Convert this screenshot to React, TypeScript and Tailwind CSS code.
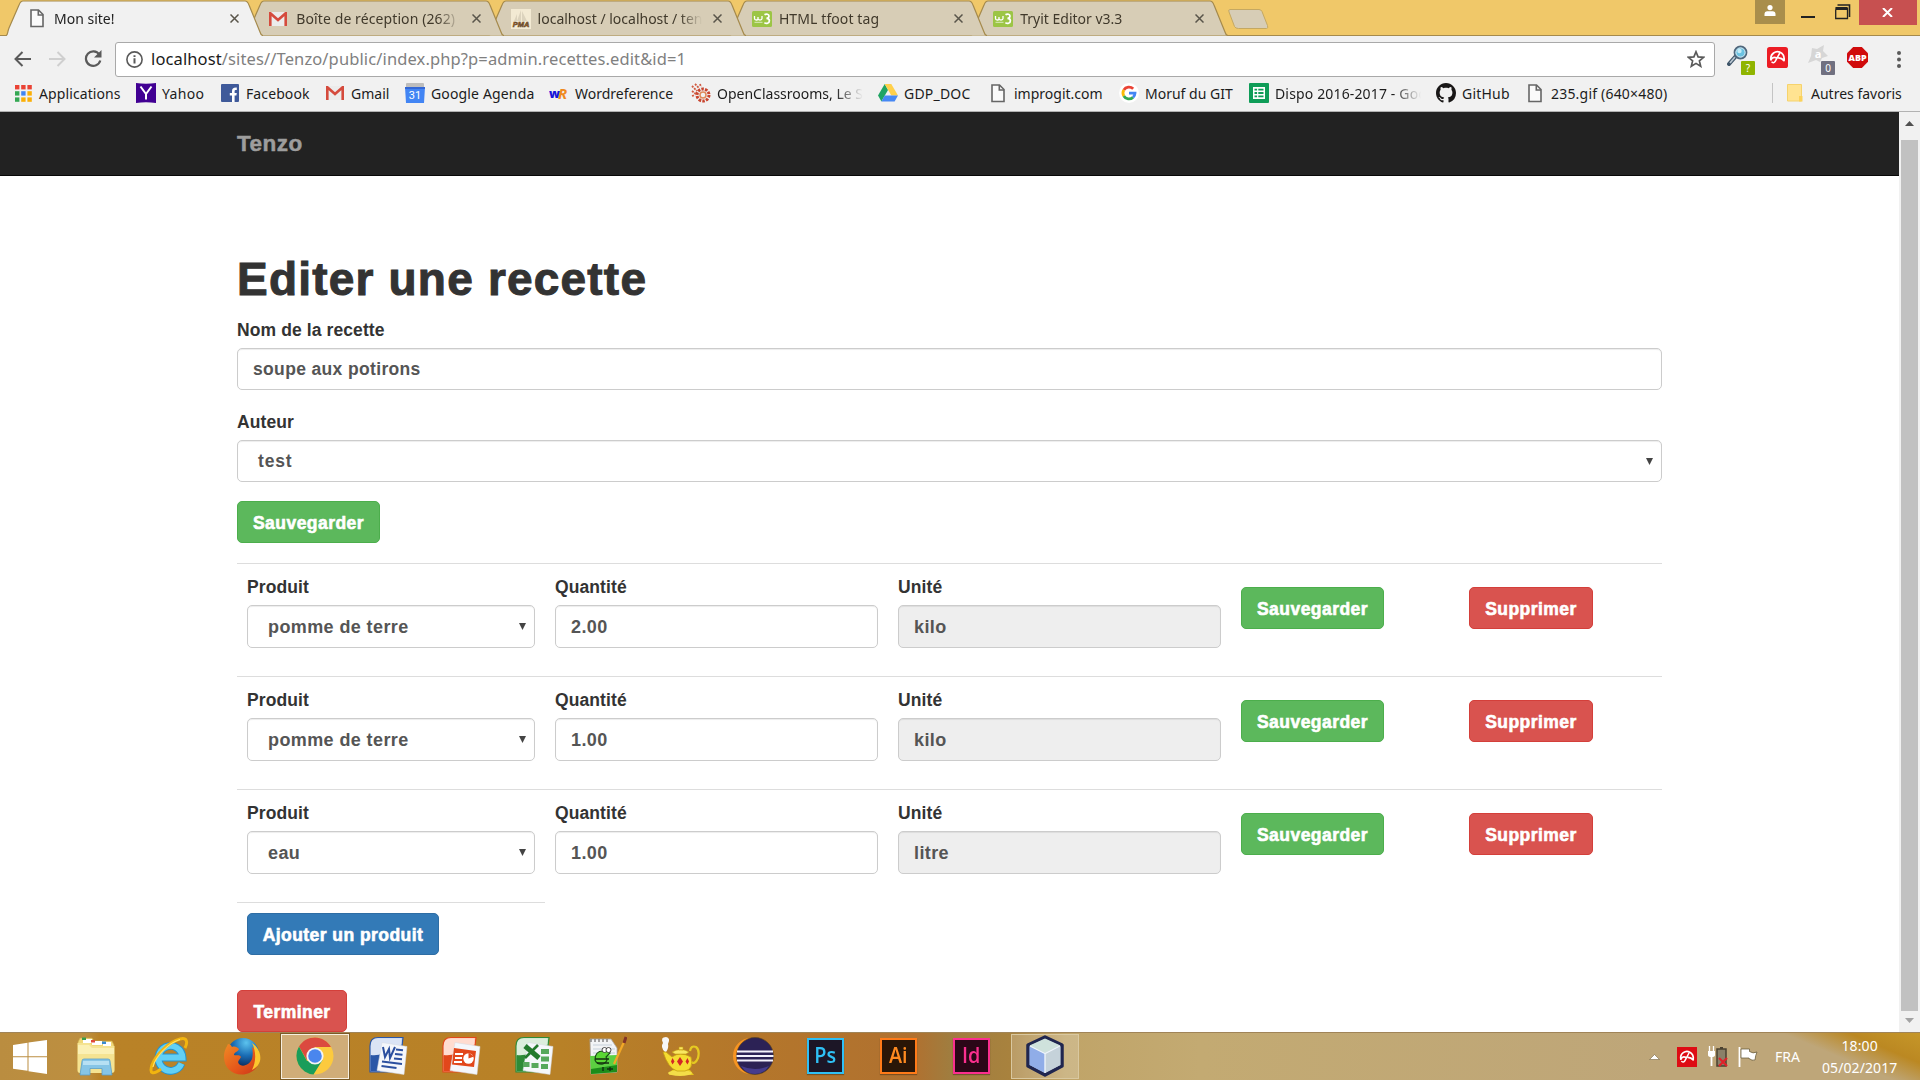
import React from "react";

type Kids = { children?: React.ReactNode };

const ui = "font-['Noto_Sans','Open_Sans',sans-serif]";

function FileIcon() {
  return (
    <svg width="14" height="19" viewBox="0 0 14 19" fill="#fafafa" stroke="#666" strokeWidth="1.6" className="shrink-0">
      <path d="M1 1h7.5L13 5.5V17.5H1z" />
      <path d="M8.3 1v5H13" fill="none" />
    </svg>
  );
}

function GmailIcon() {
  return (
    <svg width="18" height="14" viewBox="0 0 18 14" className="shrink-0">
      <rect x="1" width="16" height="14" rx="1" fill="#ececec" />
      <path d="M1.3 14V1.2L9 8l7.7-6.8V14" fill="none" stroke="#d54b3d" strokeWidth="2.6" />
    </svg>
  );
}

function W3Icon() {
  return (
    <svg width="20" height="16" viewBox="0 0 20 16" className="shrink-0">
      <rect width="20" height="16" rx="1.5" fill="#9cc545" />
      <path d="M2.500 5v2.500c0 2 3.500 2 3.500 0V6v1.500c0 2 4 2 4 0V5" fill="none" stroke="#fff" strokeWidth="1.300" />
      <path d="M12.500 3.800c2-1.500 4.500-.5 4.500 1.300 0 1.600-1.400 2.200-2.600 2.200 1.400 0 3 .6 3 2.500 0 2.700-3.200 3.300-5 1.900" fill="none" stroke="#fff" strokeWidth="1.700" />
      <path d="M2.500 11.300h8" stroke="#dcebbd" strokeWidth="1" />
    </svg>
  );
}

function PmaIcon() {
  return (
    <svg width="20" height="20" viewBox="0 0 20 20" className="shrink-0">
      <rect width="20" height="20" fill="#f3ead3" />
      <path d="M6 12L10 1v11zM11 12V2l5 10zM3 12l3-7v7z" fill="#dcd3bd" />
      <text x="10" y="18" textAnchor="middle" fontSize="7.500" fontWeight="900" fontStyle="italic" fill="#c2711d" stroke="#52402c" strokeWidth=".5" fontFamily="Liberation Sans">PMA</text>
    </svg>
  );
}

const tabs = [
  { title: "Mon site!", icon: <FileIcon />, z: "z-50", track: "" },
  { title: "Boîte de réception (262) -", icon: <GmailIcon />, z: "z-40", track: "tracking-[0.1px]" },
  { title: "localhost / localhost / tenzo", icon: <PmaIcon />, z: "z-30", track: "" },
  { title: "HTML tfoot tag", icon: <W3Icon />, z: "z-20", track: "tracking-[0.1px]" },
  { title: "Tryit Editor v3.3", icon: <W3Icon />, z: "z-10", track: "" },
];

function Tab({ title, icon, z, track, active }: { title: string; icon: React.ReactNode; z: string; track: string; active: boolean }) {
  return (
    <div className={`relative -mr-4 flex h-9 w-[257.300px] shrink-0 items-center pr-[24px] pt-px ${active ? "pl-[24px]" : "pl-[22px]"} ${z}`}>
      <svg className="absolute inset-0" width="257" height="36" viewBox="0 0 257 36">
        <path
          d={active ? "M0 36C2 36 1 33 3 28L13 5Q14.500 1 17 1H239Q241.500 1 243 5L254 32Q255 35.500 257 36Z" : "M0 35.500L13 5Q14.500 1 17 1H239Q241.500 1 243 5L254 32Q255 35.500 257 35.500Z"}
          fill={active ? "#f1f1f1" : "#d7cdb6"}
        />
        <path d="M0 35.500C2 35 1 33 3 28L13 5Q14.500 1 17 1H239Q241.500 1 243 5L254 32Q255 35.500 257 35.500" fill="none" stroke="#a58a4c" strokeWidth="1.200" />
      </svg>
      <div className="relative flex w-full items-center">
        <span className={`flex shrink-0 justify-start ${active ? "w-[24px]" : "w-[27px]"}`}>{icon}</span>
        <span className={`w-[164px] overflow-hidden whitespace-nowrap text-[14px] leading-5 ${track} ${active ? "text-[#222]" : "text-[#40392b]"} [mask-image:linear-gradient(to_right,#000_142px,transparent_164px)]`}>{title}</span>
        <svg width="9" height="9" viewBox="0 0 9 9" className="ml-auto shrink-0" stroke="#59554a" strokeWidth="1.500">
          <path d="M.5.5l8 8M8.500.5l-8 8" />
        </svg>
      </div>
    </div>
  );
}

function AppsIcon() {
  const c = ["#ea4335", "#ea4335", "#ea4335", "#34a853", "#4285f4", "#fbaf06", "#34a853", "#fbaf06", "#fbaf06"];
  return (
    <svg width="17" height="17" viewBox="0 0 17 17">
      {c.map((f, i) => (
        <rect key={i} x={(i % 3) * 6.2} y={Math.floor(i / 3) * 6.2} width="4.400" height="4.400" fill={f} />
      ))}
    </svg>
  );
}
function YahooIcon() {
  return (
    <svg width="20" height="20" viewBox="0 0 20 20">
      <path d="M0 0q10 1.500 20 0v20q-10-1.500-20 0z" fill="#410093" />
      <path d="M4.500 3.500L10 11v5.500M15.500 3.500L10 11" stroke="#fff" strokeWidth="2" fill="none" />
    </svg>
  );
}
function FacebookIcon() {
  return (
    <svg width="18" height="18" viewBox="0 0 18 18">
      <rect width="18" height="18" rx="1" fill="#3f5a9a" />
      <path d="M11 18v-6.500H8.800V9H11V7.200C11 4.600 12.300 3.300 15.800 3.500V6c-1.800-.1-2.200.2-2.200 1.500V9h2.200l-.4 2.500h-1.800V18z" fill="#fff" />
    </svg>
  );
}
function AgendaIcon() {
  return (
    <svg width="20" height="20" viewBox="0 0 20 20">
      <rect x="1" y="0" width="18" height="6" rx="1" fill="#bdbdbd" />
      <path d="M0 4h20l-1 16H1z" fill="#4285f4" />
      <path d="M0 4h20v2H0z" fill="#3367d6" />
      <text x="10" y="16" textAnchor="middle" fontSize="11" fill="#fff" fontFamily="Roboto">31</text>
    </svg>
  );
}
function WrIcon() {
  return (
    <svg width="20" height="20" viewBox="0 0 20 20">
      <text x="0" y="15" fontSize="12" fontWeight="900" fontFamily="Open Sans" fill="#1616d8">w</text>
      <text x="9" y="15.500" fontSize="15" fontWeight="700" fontStyle="italic" fontFamily="Open Sans" fill="#ef8a1f">R</text>
    </svg>
  );
}
function OcIcon() {
  return (
    <svg width="20" height="20" viewBox="0 0 20 20" fill="none">
      <circle cx="12" cy="12" r="6" stroke="#c8452f" strokeWidth="3" strokeDasharray="2.500 1.200" />
      <circle cx="12" cy="12" r="3" stroke="#e08a5a" strokeWidth="1.500" />
      <path d="M1 3l5 5M4 1l4 4M1 8l4 3M9 1l1 3M1 13l3-1" stroke="#d05a40" strokeWidth="1.800" strokeDasharray="2 1" />
    </svg>
  );
}
function DriveIcon() {
  return (
    <svg width="20" height="18" viewBox="0 0 20 18">
      <path d="M6.700 0L0 11.500 3.400 17.500 10 6z" fill="#1fa463" />
      <path d="M6.700 0h6.600L20 11.500h-6.700z" fill="#ffd04b" />
      <path d="M6.700 11.500H20l-3.400 6H3.400z" fill="#4688f4" />
    </svg>
  );
}
function GoogleIcon() {
  return (
    <svg width="20" height="20" viewBox="0 0 20 20">
      <circle cx="10" cy="10" r="10" fill="#fff" />
      <g fill="none" strokeWidth="2.800">
        <path d="M14.200 5.800A6 6 0 0 0 4.800 7" stroke="#ea4335" />
        <path d="M4.800 7a6 6 0 0 0 0 6" stroke="#fbbc05" />
        <path d="M4.800 13a6 6 0 0 0 9.200 1.400" stroke="#34a853" />
        <path d="M14 14.400A6 6 0 0 0 16 10.200h-6" stroke="#4285f4" />
      </g>
    </svg>
  );
}
function SheetsIcon() {
  return (
    <svg width="20" height="20" viewBox="0 0 20 20">
      <rect width="20" height="20" rx="1" fill="#0f9d58" />
      <path d="M4 4h12v12H4z" fill="#fff" />
      <path d="M5.500 5.700h2.600v1.800H5.500zM9.300 5.700h5.200v1.800H9.300zM5.500 9.100h2.600v1.800H5.500zM9.300 9.100h5.200v1.800H9.300zM5.500 12.500h2.600v1.800H5.500zM9.300 12.500h5.200v1.800H9.300z" fill="#0f9d58" />
    </svg>
  );
}
function GithubIcon() {
  return (
    <svg width="20" height="20" viewBox="0 0 16 16" fill="#191717">
      <path d="M8 0C3.580 0 0 3.580 0 8c0 3.540 2.290 6.530 5.470 7.590.4.070.55-.17.55-.38 0-.19-.01-.82-.01-1.490-2.010.37-2.530-.49-2.690-.94-.09-.23-.48-.94-.82-1.130-.28-.15-.68-.52-.01-.53.63-.01 1.080.58 1.230.82.72 1.210 1.870.87 2.330.66.070-.52.28-.87.51-1.070-1.780-.2-3.640-.89-3.640-3.950 0-.87.31-1.590.82-2.150-.08-.2-.36-1.020.080-2.120 0 0 .67-.21 2.200.82.64-.18 1.320-.27 2-.27s1.360.09 2 .27c1.530-1.040 2.200-.82 2.200-.82.44 1.100.16 1.920.080 2.120.51.56.82 1.270.82 2.150 0 3.070-1.870 3.750-3.650 3.950.29.25.54.73.54 1.480 0 1.070-.01 1.930-.01 2.200 0 .21.15.46.55.38A8.010 8.010 0 0 0 16 8c0-4.420-3.580-8-8-8z" />
    </svg>
  );
}

const bookmarks = [
  { t: "Applications", i: <AppsIcon />, w: "w-[123px]", tr: "tracking-[0.1px]" },
  { t: "Yahoo", i: <YahooIcon />, w: "w-[84px]", tr: "tracking-[0.3px]" },
  { t: "Facebook", i: <FacebookIcon />, w: "w-[105px]", tr: "tracking-[0.1px]" },
  { t: "Gmail", i: <GmailIcon />, w: "w-[80px]", tr: "" },
  { t: "Google Agenda", i: <AgendaIcon />, w: "w-[144px]", tr: "tracking-[0.15px]" },
  { t: "Wordreference", i: <WrIcon />, w: "w-[142px]", tr: "" },
  { t: "OpenClassrooms, Le Saviez", i: <OcIcon />, w: "w-[187px]", tr: "", fade: true },
  { t: "GDP_DOC", i: <DriveIcon />, w: "w-[110px]", tr: "tracking-[0.200px]" },
  { t: "improgit.com", i: <FileIcon />, w: "w-[131px]", tr: "" },
  { t: "Moruf du GIT", i: <GoogleIcon />, w: "w-[130px]", tr: "" },
  { t: "Dispo 2016-2017 - Google", i: <SheetsIcon />, w: "w-[187px]", tr: "tracking-[0.15px]", fade: true },
  { t: "GitHub", i: <GithubIcon />, w: "w-[89px]", tr: "tracking-[0.2px]" },
  { t: "235.gif (640×480)", i: <FileIcon />, w: "w-[170px]", tr: "tracking-[0.2px]" },
];

function Umbrella({ size, flat }: { size: number; flat?: boolean }) {
  return (
    <svg width={size} height={size} viewBox="0 0 20 20">
      <rect width="20" height="20" rx={flat ? 0 : 2.5} fill={flat ? "#de0c14" : "#ec1c24"} />
      <g fill="none" stroke="#fff" strokeWidth="1.700" strokeLinejoin="round" strokeLinecap="round">
        <path d="M3.800 12C2.800 6.500 8.500 3 12.500 5c3.200 1.500 4.200 4.500 3.700 8-1.400-1.700-3.100-2.500-5.200-2.600" />
        <path d="M3.800 12c1-2 3.200-2.600 5.400-1.600" />
        <path d="M12 6L7.800 13.800c-.8 1.500-2.200 1.300-3 .7" strokeWidth="1.500" />
      </g>
    </svg>
  );
}

function Browser() {
  return (
    <header className={`flex h-28 flex-col bg-[#f1f1f1] ${ui}`}>
      <div className="flex h-9 shrink-0 items-start border-b border-[#a58a4c] bg-[#f0c869] pl-[6px]">
        {tabs.map((t, i) => (
          <Tab key={t.title} {...t} active={i === 0} />
        ))}
        <svg width="44" height="22" viewBox="0 0 44 22" className="ml-[15px] mt-[8px]">
          <path d="M3 1.500h29q2 0 3 2l5.500 14q1 3-1 3h-28q-3 0-4-2l-5.500-14.500q-1-2.500 1-2.500z" fill="#d7cdb6" stroke="#c4a862" />
        </svg>
        <div className="ml-auto flex items-start pr-[3px]">
          <div className="flex h-6 w-[30px] justify-center bg-[#a98e4c] pt-[5px]">
            <svg width="12" height="11" viewBox="0 0 12 11" fill="#fff">
              <circle cx="6" cy="2.600" r="2.600" />
              <path d="M.5 11V8.800Q.5 6.500 3 6.300h6q2.500.2 2.500 2.500V11z" />
            </svg>
          </div>
          <div className="ml-[16px] mt-[16px] h-[2px] w-[14px] bg-[#222]" />
          <svg width="16" height="16" viewBox="0 0 16 16" className="ml-[20px] mt-[4px]" fill="none" stroke="#222">
            <path d="M.7 5.500V14.500H12.500V4.500H.7" strokeWidth="1.300" />
            <path d="M.5 4.500h12" strokeWidth="3" />
            <path d="M2.500 1h12v12" strokeWidth="1.600" />
          </svg>
          <div className="ml-[8px] flex h-[25px] w-[58px] items-center justify-center bg-[#c75050] pr-[2px]">
            <svg width="11" height="9" viewBox="0 0 11 9" stroke="#fff" strokeWidth="2">
              <path d="M1 0l9 9M10 0L1 9" />
            </svg>
          </div>
        </div>
      </div>

      <div className="flex h-[41px] shrink-0 items-center pl-[14px] pt-[5px]">
        <svg width="17" height="16" viewBox="0 0 17 16" fill="none" stroke="#5a5a5a" strokeWidth="2">
          <path d="M17 8H1.500M8.500 1L1.500 8l7 7" />
        </svg>
        <svg width="17" height="16" viewBox="0 0 17 16" fill="none" stroke="#cfcfcf" strokeWidth="2" className="ml-[18px]">
          <path d="M0 8h15.500M8.500 1l7 7-7 7" />
        </svg>
        <svg width="18" height="18" viewBox="0 0 18 18" fill="none" stroke="#5a5a5a" strokeWidth="2.200" className="ml-[18px]">
          <path d="M15.300 4.500A7.300 7.300 0 1 0 16.300 10.500" />
          <path d="M17.500 0v7.500H10z" fill="#5a5a5a" stroke="none" />
        </svg>
        <div className="ml-[13px] flex h-[35px] w-[1600px] items-center rounded-[3px] border border-[#a9a9a9] bg-white pl-[10px] pr-[9px]">
          <svg width="17" height="17" viewBox="0 0 17 17" fill="none" stroke="#5a5a5a" strokeWidth="1.600">
            <circle cx="8.500" cy="8.500" r="7.600" />
            <path d="M8.500 7.300v5.200M8.500 4.200v1.900" strokeWidth="2" />
          </svg>
          <span className="ml-[8px] whitespace-nowrap text-[16.500px] leading-6 tracking-[0.120px] text-[#808080]">
            <span className="text-[#1a1a1a]">localhost</span>/sites//Tenzo/public/index.php?p=admin.recettes.edit&amp;id=1
          </span>
          <svg width="18" height="18" viewBox="0 0 18 18" className="ml-auto" fill="none" stroke="#5a5a5a" strokeWidth="1.700">
            <path d="M9 1.800l2.100 5.100 5.500.4-4.200 3.600 1.300 5.400L9 13.400l-4.700 2.900 1.300-5.400L1.400 7.300l5.500-.4z" />
          </svg>
        </div>
        <div className="relative ml-[12px] mt-[2px] h-[30px] w-[28px]">
          <svg width="22" height="21" viewBox="0 0 22 21">
            <path d="M2 19l7-8" stroke="#3d5468" strokeWidth="4" strokeLinecap="round" />
            <path d="M3 18l5-6" stroke="#b9c6d1" strokeWidth="1.800" />
            <circle cx="13.500" cy="7.500" r="6" fill="#6cc3e2" stroke="#50677c" strokeWidth="1.800" />
            <circle cx="13.500" cy="7.500" r="4.600" fill="none" stroke="#d8e6ee" strokeWidth="1" />
            <circle cx="12.500" cy="6" r="2.200" fill="#c4ecf8" />
          </svg>
          <span className="absolute bottom-0 right-0 h-[14px] w-[14px] rounded-[1px] bg-[#8fb400] text-center text-[10px] leading-[14px] text-white">?</span>
        </div>
        <div className="ml-[12px] mt-[-3px]"><Umbrella size={21} /></div>
        <div className="relative ml-[19px] mt-[2px] h-[30px] w-[28px]">
          <svg width="22" height="20" viewBox="0 0 22 20">
            <path d="M5 3l5 1 7-4-1 6 5 5-6 2-2 4-4-2-8 3 3-7z" fill="#d6d6d6" />
            <text x="11" y="13" textAnchor="middle" fontSize="11" fontWeight="700" fill="#fff" fontFamily="Open Sans">a</text>
          </svg>
          <span className="absolute bottom-0 right-0 h-[14px] w-[14px] rounded-[1px] bg-[#707080] text-center text-[10px] leading-[14px] text-white">0</span>
        </div>
        <svg width="21" height="21" viewBox="0 0 21 21" className="ml-[12px] mt-[-3px]">
          <path d="M6.200 0h8.600L21 6.200v8.600L14.800 21H6.200L0 14.800V6.200z" fill="#d00b0b" />
          <text x="10.500" y="14" textAnchor="middle" fontSize="9.500" fontWeight="800" fill="#fff" fontFamily="Open Sans" textLength="18" lengthAdjust="spacingAndGlyphs">ABP</text>
        </svg>
        <svg width="4" height="17" viewBox="0 0 4 17" className="ml-[29px]" fill="#5a5a5a">
          <circle cx="2" cy="2" r="2" /><circle cx="2" cy="8.500" r="2" /><circle cx="2" cy="15" r="2" />
        </svg>
      </div>

      <div className="flex h-[35px] shrink-0 items-center border-b border-[#b2b2b2] pb-[2px] pl-[13px] text-[14px] text-[#1c1c1c]">
        {bookmarks.map((b) => (
          <div key={b.t} className={`flex shrink-0 items-center whitespace-nowrap ${b.w}`}>
            <span className="mr-[6px] flex w-5 shrink-0 justify-center">{b.i}</span>
            <span className={`${b.tr} ${b.fade ? "w-[146px] overflow-hidden [mask-image:linear-gradient(to_right,#000_118px,transparent_146px)]" : ""}`}>{b.t}</span>
          </div>
        ))}
        <div className="ml-[77px] h-5 w-px bg-[#c4c4c4]" />
        <svg width="16" height="18" viewBox="0 0 16 18" className="ml-[14px] shrink-0">
          <path d="M.5.500h14v16.500H.5z" fill="#ffe391" stroke="#f6d36c" />
          <path d="M12 12h3.500v5.500H12z" fill="#fbd25a" />
        </svg>
        <span className="ml-[8px] whitespace-nowrap">Autres favoris</span>
      </div>
    </header>
  );
}

function Label({ children }: Kids) {
  return <label className="mb-[5px] block pt-px text-[17.500px] font-bold leading-[25px] tracking-[0.1px] text-[#333]">{children}</label>;
}

function Field({ children, disabled, select, roomy }: Kids & { disabled?: boolean; select?: boolean; roomy?: boolean }) {
  return (
    <div className={`flex items-center justify-between rounded-[5px] border border-[#ccc] font-bold text-[#555] shadow-[inset_0_1px_1px_rgba(0,0,0,0.075)] ${roomy ? "h-[43px] text-[18px] tracking-[0.400px]" : "h-[42px] text-[17.500px] tracking-[0.350px]"} ${disabled ? "bg-[#eee]" : "bg-white"} ${select ? "pl-5 pr-[8px]" : "px-[15px]"}`}>
      <span className={select && !roomy ? "pt-px tracking-[0.800px]" : roomy ? "pt-px" : ""}>{children}</span>
      {select && (
        <svg width="7" height="7" viewBox="0 0 7 7" fill="#444"><path d="M0 0h7L3.500 7z" /></svg>
      )}
    </div>
  );
}

const variants = {
  success: "bg-[#5cb85c] border-[#4cae4c]",
  danger: "bg-[#d9534f] border-[#d43f3a]",
  primary: "bg-[#337ab7] border-[#2e6da4]",
};

function Btn({ children, kind, w }: Kids & { kind: keyof typeof variants; w: string }) {
  return (
    <button className={`block h-[42px] rounded-[5px] border pt-[2px] text-center text-[17.500px] font-bold tracking-[0.450px] text-white [-webkit-text-stroke:0.600px_#fff] ${variants[kind]} ${w}`}>{children}</button>
  );
}

const rows = [
  { product: "pomme de terre", qty: "2.00", unit: "kilo" },
  { product: "pomme de terre", qty: "1.00", unit: "kilo" },
  { product: "eau", qty: "1.00", unit: "litre" },
];

function Page() {
  return (
    <div className="flex h-[920px] overflow-hidden bg-white font-['Liberation_Sans',Arial,sans-serif]">
      <div className="w-[1899px] shrink-0">
        <nav className="h-16 border-b border-[#080808] bg-[#222] pl-[237px]">
          <span className="text-[22.500px] font-bold leading-[63px] tracking-[0.500px] text-[#9d9d9d] [-webkit-text-stroke:0.500px_#9d9d9d]">Tenzo</span>
        </nav>
        <main className="ml-[237px] w-[1425px] pt-[78px]">
          <h1 className="mb-[13px] pt-px text-[46px] font-bold leading-[49px] tracking-[1.200px] text-[#333] [-webkit-text-stroke:1px_#333]">Editer une recette</h1>
          <Label>Nom de la recette</Label>
          <Field>soupe aux potirons</Field>
          <div className="mt-[19px]">
            <Label>Auteur</Label>
            <Field select>test</Field>
          </div>
          <div className="mt-[19px]"><Btn kind="success" w="w-[143px]">Sauvegarder</Btn></div>
          <div className="mt-[20px]">
            {rows.map((r, i) => (
              <div key={i} className="grid h-[113px] grid-cols-[308px_343px_343px_228px_203px] border-t border-[#ddd]">
                <div className="p-[10px]"><Label>Produit</Label><Field select roomy>{r.product}</Field></div>
                <div className="p-[10px]"><Label>Quantité</Label><Field roomy>{r.qty}</Field></div>
                <div className="p-[10px]"><Label>Unité</Label><Field disabled roomy>{r.unit}</Field></div>
                <div className="px-[10px] pt-[23px]"><Btn kind="success" w="w-[143px]">Sauvegarder</Btn></div>
                <div className="px-[10px] pt-[23px]"><Btn kind="danger" w="w-[124px]">Supprimer</Btn></div>
              </div>
            ))}
          </div>
          <div className="w-[308px] border-t border-[#ddd] p-[10px]"><Btn kind="primary" w="w-[192px]">Ajouter un produit</Btn></div>
          <div className="mt-[25px]"><Btn kind="danger" w="w-[110px]">Terminer</Btn></div>
        </main>
      </div>
      <div className="flex flex-1 flex-col items-center bg-[#f1f1f1]">
        <svg width="9" height="5" viewBox="0 0 9 5" fill="#505050" className="mt-[9px]"><path d="M0 5L4.500 0 9 5z" /></svg>
        <div className="mt-[14px] h-[871px] w-[17px] bg-[#c1c1c1]" />
        <svg width="9" height="5" viewBox="0 0 9 5" fill="#a3a3a3" className="mt-[7px]"><path d="M0 0L4.500 5 9 0z" /></svg>
      </div>
    </div>
  );
}

function ExplorerIcon() {
  return (
    <svg width="40" height="40" viewBox="0 0 40 40">
      <path d="M4 2h12l2 3h18l2 4v27H2V6z" fill="#f0d878" stroke="#c9a94a" strokeWidth=".6" />
      <path d="M7 3h9v4H7zM16 5h10v4H16zM27 6h8v4h-8z" fill="#fff" />
      <path d="M6 1.500h4v2.500H6z" fill="#3a9d4d" /><path d="M15 4h4v2.500h-4z" fill="#e04a3a" /><path d="M26 5.500h4V8h-4z" fill="#3a8bd0" />
      <path d="M1.500 7h12l3 3h22v24q0 3-3 3H4q-2.500 0-2.500-3z" fill="#f5e391" />
      <path d="M2 9h11l3 3h22v6H2z" fill="#fbf0b4" />
      <path d="M6 25q0-2 2-2h24q2 0 2 2l2 14H26v-6.500H14V39H4z" fill="#86c5e6" stroke="#5a9fc8" strokeWidth=".8" />
      <path d="M7 25h26v4H7z" fill="#b7e0f3" />
    </svg>
  );
}
function IeIcon() {
  return (
    <svg width="40" height="40" viewBox="0 0 40 40" fill="none">
      <path d="M32.500 27.500A12 12.500 0 1 1 33.500 21.500H12" stroke="#2593cf" strokeWidth="7.800" />
      <path d="M32.500 27.500A12 12.500 0 1 1 33.500 21.500H12" stroke="#62d0f5" strokeWidth="5.800" />
      <path d="M12 33C4 39 0 38 3 29 7 18 20 6 31 3c7-1.800 8 3 5 9" stroke="#f2b50f" strokeWidth="3" />
      <path d="M4 31C6 21 19 7 31 3.500" stroke="#ffe26a" strokeWidth="1.200" />
    </svg>
  );
}
function FirefoxIcon() {
  return (
    <svg width="38" height="38" viewBox="0 0 38 38">
      <defs>
        <radialGradient id="fb" cx=".6" cy=".15" r=".8"><stop offset="0" stopColor="#5cc3ee" /><stop offset=".5" stopColor="#1a6db5" /><stop offset="1" stopColor="#0b2350" /></radialGradient>
        <linearGradient id="fo" x1="0" y1="0" x2="1" y2="1"><stop offset="0" stopColor="#f08a24" /><stop offset=".6" stopColor="#e4551a" /><stop offset="1" stopColor="#c8341a" /></linearGradient>
      </defs>
      <circle cx="20" cy="17" r="16" fill="url(#fb)" />
      <path d="M5 7c2 0 3 1 4 3 3-1 5 0 7 2-1 3-5 3-5 6 2 1 5-1 7 2-2 4-4 4-2 7 4 4 11 0 13-5 1-4 1-8 0-12 5 3 8 8 7 14C35 32 27 37.500 19 37.500 8 37.500 1 30 1 20 1 14 3 11 5 7z" fill="url(#fo)" />
      <path d="M29 6c6 4 9.500 11 8 18-1 4-4 7-8 9 4-8 4.500-18 0-27z" fill="#fcc62e" />
    </svg>
  );
}
function ChromeIcon() {
  return (
    <svg width="38" height="38" viewBox="0 0 38 38">
      <circle cx="19" cy="19" r="18.500" fill="#fcca3e" />
      <path d="M3 9.500A18.500 18.500 0 0 1 35 10H19l-8.200 13z" fill="#db4a3f" />
      <path d="M3 9.500A18.500 18.500 0 0 0 17.500 37.400L26.500 23 11 24z" fill="#1a9d5a" />
      <circle cx="19" cy="19" r="8.600" fill="#f4f4f4" />
      <circle cx="19" cy="19" r="6.800" fill="#4a86ee" />
    </svg>
  );
}
function OfficeIcon({ app }: { app: "word" | "ppt" | "excel" }) {
  const c = { word: ["#2b57a7", "#b6c9ea"], ppt: ["#e2471b", "#ffb9a0"], excel: ["#2e8b37", "#b7dcb8"] }[app];
  return (
    <svg width="40" height="40" viewBox="0 0 40 40">
      <path d="M10 1.500h25L31 36H2V10q0-8.500 8-8.500z" fill={c[1]} stroke={c[0]} strokeWidth="1.200" />
      <path d="M2.700 20Q18 22 33.500 8v-5.800H10Q2.700 2.200 2.700 10z" fill="#fff" opacity=".5" />
      <path d="M2.700 19Q10 20 15 17l-3 18.500H2.700z" fill={c[0]} />
      <path d="M14 6.500l25 4-3 28-27-4z" fill="#f5f7fb" stroke="#d5d9e0" strokeWidth=".5" />
      {app === "word" && (
        <g stroke="#2b4f9f" fill="none">
          <path d="M15 11l2 10 4-8 1 9 5-11" strokeWidth="2" />
          <path d="M28 13.500l7 .8M27 18l7.500.8M26 22.500l8 .8M14 25.500l20 2.500M13.500 30l15 2" strokeWidth="2" />
        </g>
      )}
      {app === "ppt" && (
        <g>
          <path d="M13 12l22 3-2 16-22-2.500z" fill="#e2471b" />
          <path d="M14 18h8M14 22h7M13 26h8" stroke="#fff" strokeWidth="2" />
          <circle cx="27.500" cy="22.500" r="5.200" fill="#fff" />
          <path d="M27.500 22.500V16.500l5.500 4z" fill="#e2471b" />
        </g>
      )}
      {app === "excel" && (
        <g>
          <path d="M11 10l14 12" stroke="#237a2c" strokeWidth="5" /><path d="M24 9L11 22" stroke="#237a2c" strokeWidth="2.600" />
          <path d="M27 13h8v5h-8zM27 20.500h8v5h-8zM27 28h7v5h-7zM17.500 27h7v5h-7zM9 26h6.500v5H9z" fill="#57a85c" />
        </g>
      )}
    </svg>
  );
}
function NotepadIcon() {
  return (
    <svg width="40" height="40" viewBox="0 0 40 40">
      <path d="M3 3h21l6 9v24L4 38z" fill="#f2f4f6" stroke="#a8a8a8" strokeWidth=".8" />
      <path d="M4 3v3M8 3v3M12 3v3M16 3v3M20 3v3" stroke="#777" strokeWidth="1.300" />
      <path d="M6 9h19M6 13h22M6 17h22" stroke="#c5d0da" />
      <path d="M3 20l27-1v17L4 38z" fill="#5cd042" />
      <path d="M4 33l26-4v7L4 38z" fill="#1d8c1a" />
      <path d="M8 24q0-9 8-9 6-3 7 2l-4 4q3 4-3 7-6 1-8-4z" fill="#5ad634" stroke="#184c12" strokeWidth="1.200" />
      <circle cx="17.500" cy="14" r="2.500" fill="#fff" stroke="#222" strokeWidth=".8" /><circle cx="21.500" cy="14" r="2.500" fill="#fff" stroke="#222" strokeWidth=".8" />
      <path d="M8 23h14M10 27h12M16 31v4M20 33h6M23 31v4" stroke="#142c10" strokeWidth="1.400" />
      <path d="M27 28L37 6" stroke="#f2a826" strokeWidth="2.200" /><path d="M37 7l2-6" stroke="#823327" strokeWidth="3" />
    </svg>
  );
}
function TeapotIcon() {
  return (
    <svg width="42" height="42" viewBox="0 0 42 42">
      <path d="M6 17Q1 12 4 8 1 2 7 2q5 1 2 7 1 4-2 8z" fill="#f7f7f7" />
      <path d="M31 16q1-6 6-4 4 3 2 11-3 7-7 4" fill="none" stroke="#e5c922" strokeWidth="2.200" />
      <path d="M13 35h18l4 5H10z" fill="#e5c61c" /><ellipse cx="21" cy="38" rx="12" ry="3" fill="#f4dd48" />
      <path d="M4 17l3 0 6 5q8-6 19 0 3 12-6 14H18Q9 33 4 17z" fill="#f5dc31" stroke="#c6a012" strokeWidth=".8" />
      <path d="M13 17q9-5 17 0l-3 2H16zM20 12h4v3h-4z" fill="#f9e761" stroke="#c6a012" strokeWidth=".6" />
      <path d="M21 22l3 4.500-3 4.500-3-4.500zM13.500 23l2 3.500-2 3-1.500-3zM28.500 23l1.500 3.500-1.500 3-2-3z" fill="#d32626" />
    </svg>
  );
}
function EclipseIcon() {
  return (
    <svg width="42" height="40" viewBox="0 0 42 40">
      <circle cx="19" cy="20" r="18" fill="#f79421" />
      <circle cx="23" cy="20" r="18.500" fill="#2c2255" stroke="#53401f" strokeWidth=".6" />
      <path d="M9 30Q23 36 37 30q-5 8-14 8T9 30z" fill="#463c8d" />
      <path d="M5 15.500h36M4.500 20h37M5 24.500h36" stroke="#f4f2fb" strokeWidth="2.200" />
    </svg>
  );
}
function AdobeIcon({ t, box, text }: { t: string; box: string; text: string }) {
  return (
    <div className={`flex h-[36px] w-[37px] items-center justify-center border-2 pb-[5px] text-[22px] leading-none shadow-[0_1px_1px_rgba(0,0,0,0.3)] ${box} ${text}`}>
      <span className="origin-center scale-x-90 font-['Open_Sans',sans-serif] font-semibold">{t}</span>
    </div>
  );
}
function NetbeansIcon() {
  return (
    <svg width="40" height="42" viewBox="0 0 40 42">
      <path d="M20 2l17 8v21L20 40 3 31V10z" fill="#a9b9d4" stroke="#20264f" strokeWidth="3.500" strokeLinejoin="round" />
      <path d="M20 3.500l15.500 7L20 18 4.500 10.500z" fill="#cfe2dc" />
      <path d="M4.500 11.500L20 18.500V38L4.500 30z" fill="#90ade8" />
      <path d="M35.500 11.500L20 18.500V38l15.500-8z" fill="#c5d2da" />
      <path d="M5 11l15 7.500 15-7.500M20 18.500V38" stroke="#f0f6fb" strokeWidth="1.300" fill="none" />
    </svg>
  );
}

const apps: { icon: React.ReactNode; box?: string }[] = [
  { icon: <ExplorerIcon /> },
  { icon: <IeIcon /> },
  { icon: <FirefoxIcon /> },
  { icon: <ChromeIcon />, box: "border-[#f7efe0] bg-[#d0ad78] outline outline-[#7a5a24]" },
  { icon: <OfficeIcon app="word" /> },
  { icon: <OfficeIcon app="ppt" /> },
  { icon: <OfficeIcon app="excel" /> },
  { icon: <NotepadIcon /> },
  { icon: <TeapotIcon /> },
  { icon: <EclipseIcon /> },
  { icon: <AdobeIcon t="Ps" box="border-[#2fc0f5] bg-[#1c1626]" text="text-[#2fc0f5]" /> },
  { icon: <AdobeIcon t="Ai" box="border-[#ff7a18] bg-[#2a1607]" text="text-[#ff8a20]" /> },
  { icon: <AdobeIcon t="Id" box="border-[#fb2f8e] bg-[#2b0717]" text="text-[#fb2f8e]" /> },
  { icon: <NetbeansIcon />, box: "border-[#d9c8a0] bg-white/20" },
];

function Taskbar() {
  return (
    <footer className={`flex h-12 items-center overflow-hidden border-t border-[#a08458] bg-[linear-gradient(90deg,#ba8d40_0px,#bd8f40_86px,#b98227_100px,#b88127_560px,#b4762b_760px,#b07130_915px,#a07d3f_950px,#a8823e_1010px,#c0a468_1065px,#c3aa72_1200px,#bea679_1660px,#bea679_1920px)] ${ui}`}>
      <div className="flex w-[59px] shrink-0 justify-center">
        <svg width="34" height="34" viewBox="0 0 34 34" fill="#fff">
          <path d="M0 5l14.500-2.200V16.300H0zM15.500 2.600L34 0v16.300H15.500zM0 17.300h14.500v13.500L0 28.700zM15.500 17.300H34V34l-18.500-2.800z" />
        </svg>
      </div>
      {apps.map((a, i) => (
        <div key={i} className="flex w-[73px] shrink-0 justify-center">
          <div className={`flex h-[45px] w-[68px] items-center justify-center border pb-px ${a.box ?? "border-transparent"}`}>{a.icon}</div>
        </div>
      ))}
      <div className="ml-auto flex h-12 w-[270px] shrink-0 items-center bg-[linear-gradient(23deg,transparent_96px,#bb8822_122px,#c69729_150px,#bf9a3a_200px)] text-[14px] text-white">
        <svg width="11" height="6" viewBox="0 0 11 6" className="ml-[-1px]"><path d="M.5 5.500L5.500.5l5 5z" fill="#fff" stroke="#776644" strokeWidth=".6" /></svg>
        <span className="ml-[17px]"><Umbrella size={20} flat /></span>
        <svg width="20" height="21" viewBox="0 0 20 21" className="ml-[11px]" fill="none">
          <path d="M9 3h9v17H9z" fill="#8a8068" stroke="#4b4130" strokeWidth="1.500" /><path d="M12 1h3v2h-3z" fill="#4b4130" />
          <path d="M1.500 0v5M5.500 0v5" stroke="#fff" strokeWidth="1.300" /><path d="M0 5h7v4q0 2-3.500 2T0 9z" fill="#fff" /><path d="M3.500 10v10" stroke="#fff" strokeWidth="1.800" />
          <path d="M11 12l8 8M19 12l-8 8" stroke="#e0222a" strokeWidth="2.200" />
        </svg>
        <svg width="20" height="20" viewBox="0 0 20 20" className="ml-[10px]">
          <path d="M1.500 0v20" stroke="#fff" strokeWidth="1.800" /><path d="M3 2h8.500v2.500q3.500 2.500 7.500.5-1.500 3-2 8-3 1-6-1.500V11H3z" fill="#fff" stroke="#5c5030" strokeWidth=".7" />
        </svg>
        <span className="ml-[17px]">FRA</span>
        <div className="ml-[22px] flex flex-col items-center text-[14px] leading-[22px] tracking-[0.100px]">
          <span>18:00</span>
          <span>05/02/2017</span>
        </div>
      </div>
    </footer>
  );
}

export default function App() {
  return (
    <div className="h-[1080px] w-[1920px] overflow-hidden bg-white">
      <Browser />
      <Page />
      <Taskbar />
    </div>
  );
}
